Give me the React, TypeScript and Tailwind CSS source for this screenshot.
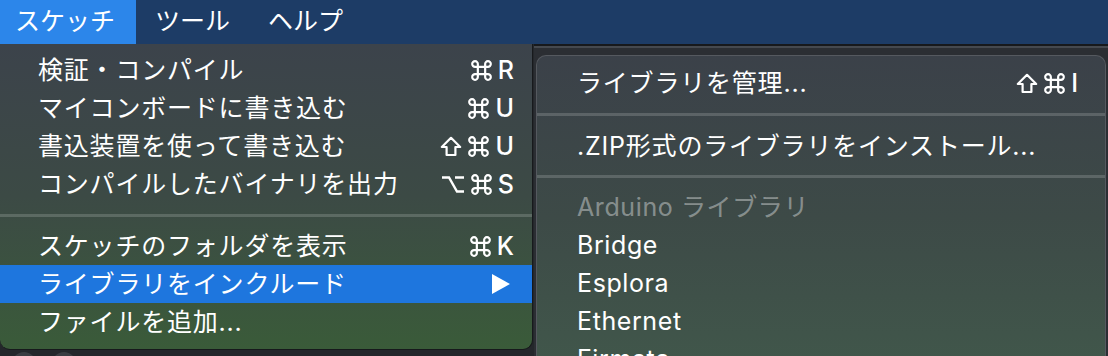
import React from "react";

const FONT = {
  fontFamily: '"Inter", "Noto Sans CJK JP", "DejaVu Sans", sans-serif',
};

type Item = { label: string; sc?: string[]; hl?: boolean; arrow?: boolean };

const group1: Item[] = [
  { label: "検証・コンパイル", sc: ["cmd", "R"] },
  { label: "マイコンボードに書き込む", sc: ["cmd", "U"] },
  { label: "書込装置を使って書き込む", sc: ["shift", "cmd", "U"] },
  { label: "コンパイルしたバイナリを出力", sc: ["opt", "cmd", "S"] },
];
const group2: Item[] = [
  { label: "スケッチのフォルダを表示", sc: ["cmd", "K"] },
  { label: "ライブラリをインクルード", hl: true, arrow: true },
  { label: "ファイルを追加..." },
];

function Cmd() {
  return (
    <svg width="23" height="23" viewBox="0 0 22 22" fill="none">
      <path
        d="M7.5 7.5V5A2.7 2.7 0 1 0 5 7.5H17A2.7 2.7 0 1 0 14.5 5V17A2.7 2.7 0 1 0 17 14.5H5A2.7 2.7 0 1 0 7.5 17Z"
        stroke="white"
        strokeWidth="2.1"
        strokeLinejoin="round"
      />
    </svg>
  );
}
function Shift() {
  return (
    <svg width="22" height="21" viewBox="0 0 22 21" fill="none">
      <path
        d="M11 1.8L20.2 11H15.4V19H6.6V11H1.8Z"
        stroke="white"
        strokeWidth="2.2"
        strokeLinejoin="round"
      />
    </svg>
  );
}
function Opt() {
  return (
    <svg width="24" height="19" viewBox="0 0 24 19" fill="none">
      <path d="M1 2.5H8L16 16.5H23M14 2.5H23" stroke="white" strokeWidth="2.4" />
    </svg>
  );
}

function Shortcut({ keys }: { keys: string[] }) {
  return (
    <div className="flex items-center gap-[5px]">
      {keys.map((k, i) => {
        if (k === "cmd") return <Cmd key={i} />;
        if (k === "shift") return <Shift key={i} />;
        if (k === "opt") return <Opt key={i} />;
        return (
          <span key={i} className="text-[25px] font-medium leading-none">
            {k}
          </span>
        );
      })}
    </div>
  );
}

function Row({ item }: { item: Item }) {
  return (
    <div
      className={
        "h-[38px] flex items-center justify-between pl-[38px] pr-[18px] " +
        (item.hl ? "bg-[#1e76de]" : "")
      }
    >
      <span className="text-[25px] tracking-[0.8px] leading-none">{item.label}</span>
      {item.sc && <Shortcut keys={item.sc} />}
      {item.arrow && (
        <svg width="18" height="20" viewBox="0 0 18 20" className="mr-[4px]">
          <polygon points="0,0 18,10 0,20" fill="white" />
        </svg>
      )}
    </div>
  );
}

function Sep({ h }: { h: number }) {
  return (
    <div className="flex items-center shrink-0" style={{ height: h }}>
      <div className="h-[3px] w-full bg-[#ffffff]/[0.17]" />
    </div>
  );
}

export default function App() {
  return (
    <div
      className="w-[1108px] h-[356px] overflow-hidden bg-[#24272b] text-white flex flex-col"
      style={FONT}
    >
      {/* menu bar */}
      <div className="h-[44px] shrink-0 bg-[#1d3c66] flex items-center text-[25px]">
        <div className="h-full bg-[#2c86ea] flex items-center pl-[15px] pr-[21px]">スケッチ</div>
        <div className="pl-[19px]">ツール</div>
        <div className="pl-[38px]">ヘルプ</div>
      </div>

      <div className="flex flex-1 min-h-0">
        {/* left menu column */}
        <div className="w-[534px] shrink-0 flex flex-col">
          <div className="w-[533px] shrink-0 rounded-b-[10px] border-r border-b border-[#17191c] bg-gradient-to-b from-[#3c434b] via-[#3c4a45] to-[#3a5b39] pt-[7px] pb-[8px]">
            {group1.map((it) => (
              <Row key={it.label} item={it} />
            ))}
            <Sep h={24} />
            {group2.map((it) => (
              <Row key={it.label} item={it} />
            ))}
          </div>
          <div className="flex gap-[16px] pl-[12px] pt-[2px] shrink-0">
            <div className="w-[24px] h-[24px] rounded-full bg-[#3a3d42]" />
            <div className="w-[24px] h-[24px] rounded-full bg-[#3a3d42]" />
          </div>
        </div>

        {/* submenu column */}
        <div className="flex-1 flex flex-col bg-[#2b2e33] border-t-[2px] border-[#17191c]">
          <div className="h-[2px] shrink-0 bg-[#45494f]" />
          <div className="h-[7px] shrink-0" />
          <div className="flex-1 shrink-0 ml-[2px] mr-[2px] rounded-t-[10px] border border-b-0 border-[#55595f] bg-gradient-to-b from-[#3b4149] via-[#3d4a47] to-[#41584b] pt-[8px]">
            <div className="h-[38px] flex items-center justify-between pl-[40px] pr-[27px]">
              <span className="text-[25px] tracking-[0.8px] leading-none">ライブラリを管理...</span>
              <Shortcut keys={["shift", "cmd", "I"]} />
            </div>
            <Sep h={25} />
            <div className="h-[38px] flex items-center pl-[40px]">
              <span className="text-[25px] tracking-[0.8px] leading-none">
                .ZIP形式のライブラリをインストール...
              </span>
            </div>
            <Sep h={23} />
            <div className="h-[38px] flex items-center pl-[40px]">
              <span className="text-[25px] tracking-[0.6px] leading-none text-white/40">
                Arduino ライブラリ
              </span>
            </div>
            {["Bridge", "Esplora", "Ethernet", "Firmata"].map((n) => (
              <div key={n} className="h-[38px] flex items-center pl-[40px]">
                <span className="text-[25px] tracking-[0.6px] leading-none">{n}</span>
              </div>
            ))}
          </div>
        </div>
      </div>
    </div>
  );
}
